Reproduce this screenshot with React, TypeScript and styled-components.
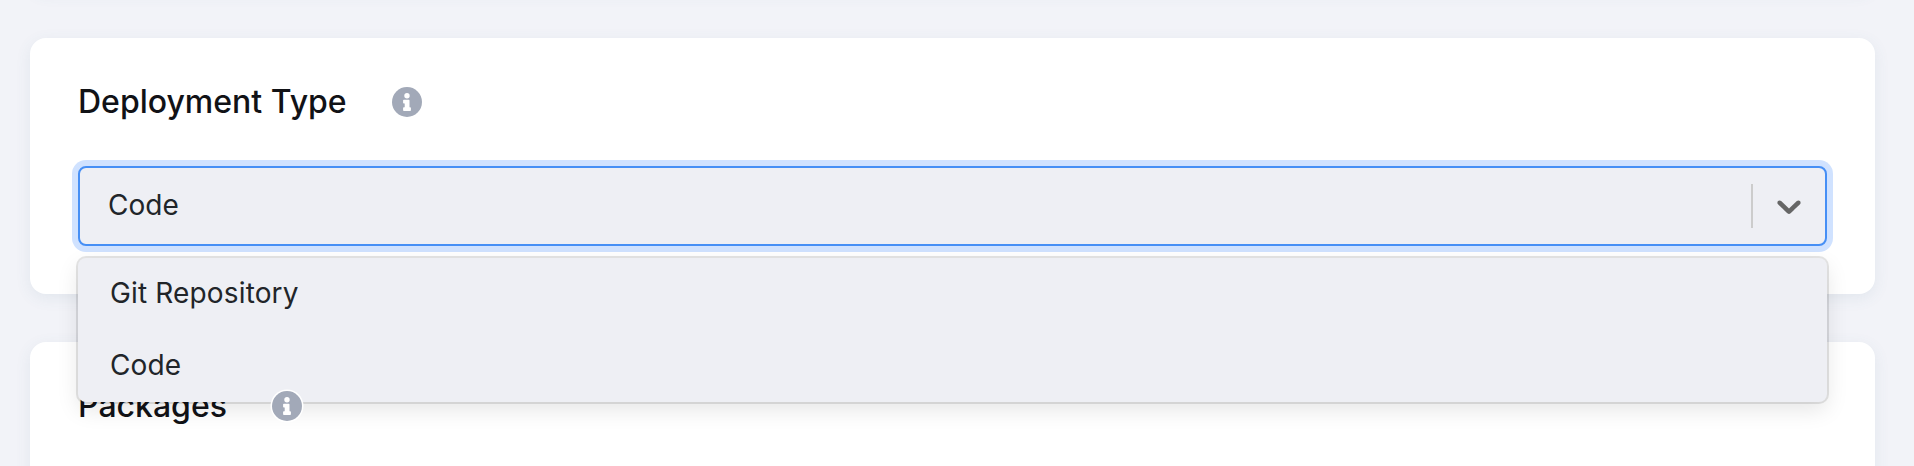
import React from "react";
import styled, { createGlobalStyle } from "styled-components";

const GlobalStyle = createGlobalStyle`
  * { box-sizing: border-box; }
  body {
    margin: 0;
    background: #f2f3f8;
    font-family: Inter, "Liberation Sans", sans-serif;
    color: #212529;
    overflow: hidden;
  }
`;

const Page = styled.main`
  height: 466px;
  overflow: hidden;
  padding: 0 39px 0 30px;
`;

const Stack = styled.div`
  display: flex;
  flex-direction: column;
  gap: 48px;
  margin-top: -98px;
`;

const Card = styled.section<{ $height: number }>`
  flex: none;
  height: ${(p) => p.$height}px;
  padding: 40px 48px 48px;
  background: #fff;
  border-radius: 16px;
  box-shadow: 0 4px 16px rgba(62, 110, 130, 0.09);
`;

const CardHeader = styled.header`
  display: flex;
  align-items: center;
  height: 48px;
  gap: 43px;
`;

const Title = styled.h2`
  margin: 0;
  font-size: 32px;
  font-weight: 500;
  line-height: 48px;
  color: #111216;
  white-space: nowrap;
`;

const InfoBadge = styled.span`
  position: relative;
  z-index: 20;
  display: block;
  width: 34px;
  height: 34px;

  svg {
    display: block;
    overflow: visible;
  }
`;

const Select = styled.div`
  position: relative;
  margin-top: 40px;
  font-size: 28px;
`;

const Control = styled.div`
  display: flex;
  align-items: stretch;
  height: 80px;
  border: 2px solid #468ff5;
  border-radius: 8px;
  background: #eeeff4;
  box-shadow: 0 0 0 6px #d0e2ff;
`;

const Value = styled.div`
  flex: 1;
  padding-left: 28px;
  line-height: 74px;
`;

const Separator = styled.span`
  width: 2px;
  margin: 16px 0;
  background: #ccc;
`;

const Indicator = styled.span`
  display: flex;
  align-items: center;
  padding: 0 16px;
  color: #666;
`;

const Menu = styled.ul`
  position: absolute;
  z-index: 10;
  top: 92px;
  left: 0;
  right: 0;
  margin: 0;
  padding: 0;
  list-style: none;
  background: #eeeff4;
  border-radius: 8px;
  box-shadow: 0 0 0 2px rgba(0, 0, 0, 0.1), 0 8px 22px rgba(0, 0, 0, 0.1);
`;

const Option = styled.li`
  height: 72px;
  padding-left: 32px;
  line-height: 70px;
  letter-spacing: 0.15px;
`;

const InfoIcon = () => (
  <InfoBadge>
    <svg width="34" height="34" viewBox="-17 -17 34 34">
      <circle r="16.5" fill="#fff" />
      <circle r="15" fill="#a2a9b8" />
      <circle cy="-6.3" r="2.7" fill="#fff" />
      <path
        d="M-3.1-2.3H1.7Q2.5-2.3 2.5-1.5V5.2H3.1Q3.9 5.2 3.9 6V8.2Q3.9 9 3.1 9H-3.1Q-3.9 9-3.9 8.2V6Q-3.9 5.2-3.1 5.2H-2.3V1.5H-3.1Q-3.9 1.5-3.9.7V-1.5Q-3.9-2.3-3.1-2.3Z"
        fill="#fff"
      />
    </svg>
  </InfoBadge>
);

const Chevron = () => (
  <svg width="40" height="40" viewBox="0 0 20 20" fill="currentColor">
    <path d="M4.516 7.548c0.436-0.446 1.043-0.481 1.576 0l3.908 3.747 3.908-3.747c0.533-0.481 1.141-0.446 1.574 0 0.436 0.445 0.408 1.197 0 1.615-0.406 0.418-4.695 4.502-4.695 4.502-0.217 0.223-0.502 0.335-0.787 0.335s-0.57-0.112-0.789-0.335c0 0-4.287-4.084-4.695-4.502s-0.436-1.17 0-1.615z" />
  </svg>
);

const options = ["Git Repository", "Code"];

export default function App() {
  return (
    <>
      <GlobalStyle />
      <Page>
        <Stack>
          <Card $height={88} />
          <Card $height={256}>
            <CardHeader>
              <Title>Deployment Type</Title>
              <InfoIcon />
            </CardHeader>
            <Select>
              <Control>
                <Value>Code</Value>
                <Separator />
                <Indicator>
                  <Chevron />
                </Indicator>
              </Control>
              <Menu>
                {options.map((name) => (
                  <Option key={name}>{name}</Option>
                ))}
              </Menu>
            </Select>
          </Card>
          <Card $height={220}>
            <CardHeader>
              <Title>Packages</Title>
              <InfoIcon />
            </CardHeader>
          </Card>
        </Stack>
      </Page>
    </>
  );
}
